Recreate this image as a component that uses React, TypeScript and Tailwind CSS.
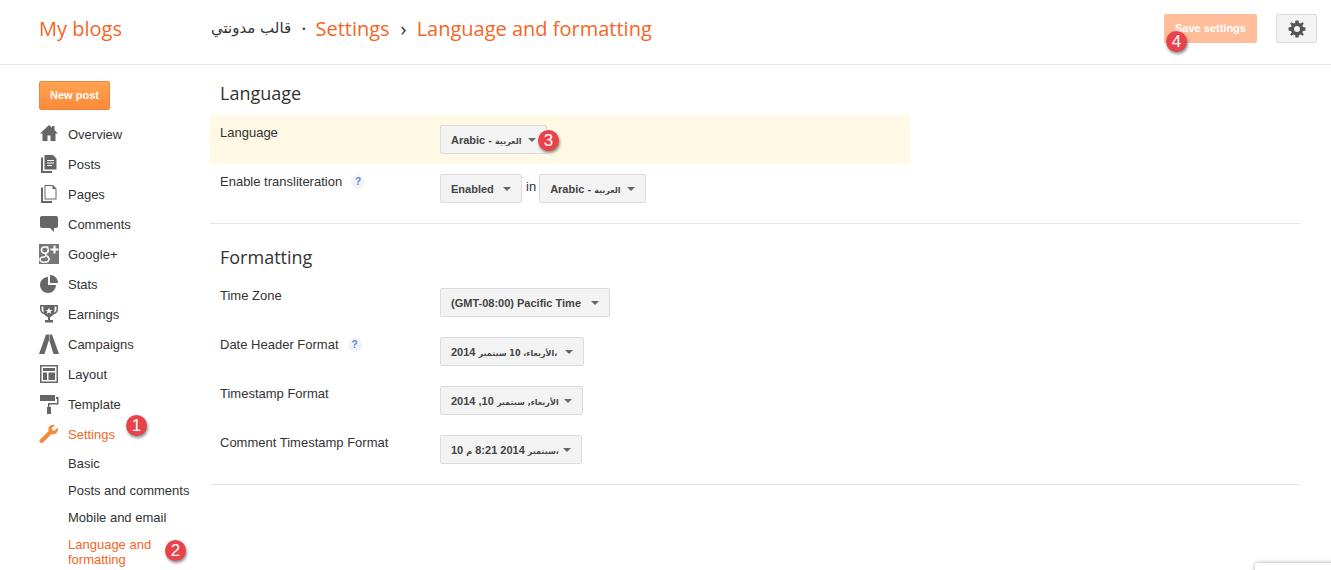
import type { ReactNode } from 'react';

const arabicStack = { fontFamily: '"DejaVu Sans", sans-serif' };

function Badge({ n, className }: { n: number; className: string }) {
  return (
    <span className={`absolute z-10 flex h-[21px] w-[21px] items-center justify-center rounded-full bg-[#e8424a] text-[17px] font-light leading-none text-white shadow-[1px_2px_3px_rgba(0,0,0,0.45)] ${className}`}>
      {n}
    </span>
  );
}

const icons: Record<string, ReactNode> = {
  overview: <path d="M10 1 L13 3.8 V2 H15.5 V6 L19 9.5 H16.5 V17 H11.5 V11.5 H8.5 V17 H3.5 V9.5 H1 Z" />,
  posts: (
    <>
      <path d="M4 3.5 H2 V19 H13 V17 H4 Z" />
      <path fillRule="evenodd" d="M5.5 1 H14 L17.5 4.5 V15.5 H5.5 Z M8 6 V7 H15 V6 Z M8 8.5 V9.5 H15 V8.5 Z M8 11 V12 H13 V11 Z" />
    </>
  ),
  pages: (
    <>
      <path d="M4 3.5 H2 V19 H13 V17 H4 Z" />
      <path fillRule="evenodd" d="M5.5 1 H14 L17.5 4.5 V15.5 H5.5 Z M6.5 2 V14.5 H16.5 V5 H13.5 V2 Z" />
    </>
  ),
  comments: <path d="M3 2 H17 Q19 2 19 4 V12 Q19 14 17 14 H15 V18 L11 14 H3 Q1 14 1 12 V4 Q1 2 3 2 Z" />,
  google: (
    <>
      <rect width="20" height="20" fill="#777777" />
      <path d="M14.5 1.5 H16.5 V4.5 H19.5 V6.5 H16.5 V9.5 H14.5 V6.5 H11.5 V4.5 H14.5 Z" fill="#ffffff" />
      <path d="M9.5 3 H5.5 C3.5 3 2.5 4.5 2.5 6 C2.5 8 4 9.2 6 9.2 C8 9.2 9.3 7.8 9.3 6 C9.3 5 8.8 4 8 3.4" fill="none" stroke="#ffffff" strokeWidth="1.6" />
      <path d="M7 9.5 C6 10.5 7 11.3 8 12 C9.5 13 10 14 10 15 C10 17 8 18.3 5.5 18.3 C3 18.3 1 17.2 1 15.4 C1 13.8 3 12.5 6.5 12.7" fill="none" stroke="#ffffff" strokeWidth="1.6" />
    </>
  ),
  stats: (
    <>
      <path d="M9 3 A8 8 0 1 0 17 11 H9 Z" />
      <path d="M11 1 A8 8 0 0 1 19 9 H11 Z" />
    </>
  ),
  earnings: (
    <path fillRule="evenodd" d="M1 1 H19 V5 C19 8 17 10 14.5 10.5 C13.5 12 12 12.7 11 13 V16 H14 V18.5 H6 V16 H9 V13 C8 12.7 6.5 12 5.5 10.5 C3 10 1 8 1 5 Z M2.5 2.5 V5 C2.5 6.5 3.5 8 5 8.7 C4.5 7 4.3 4.5 4.3 2.5 Z M17.5 2.5 H15.7 C15.7 4.5 15.5 7 15 8.7 C16.5 8 17.5 6.5 17.5 5 Z M10 3.5 L11 6 H13.5 L11.5 7.5 L12.3 10 L10 8.5 L7.7 10 L8.5 7.5 L6.5 6 H9 Z" />
  ),
  campaigns: (
    <>
      <path d="M7 0.5 H10 V6 L5.5 20 H0 Z" />
      <path d="M10.5 0.5 H13 L20 20 H14.5 L10.5 7 Z" />
    </>
  ),
  layout: <path fillRule="evenodd" d="M1 1 H19 V19 H1 Z M2.5 2.5 V17.5 H17.5 V2.5 Z M4 4 H16 V7 H4 Z M4 8.5 H8 V16 H4 Z M9.5 8.5 H16 V16 H9.5 Z" />,
  template: (
    <>
      <path d="M1 1 H16 V7 H1 Z" />
      <path d="M17 3 H19.5 V10.5 H10.5 V13 H12 V20 H8 V13 H9 V9 H18 V5 H17 Z" />
    </>
  ),
  settings: <path d="M18.8 3.6 L15.5 6.8 L13.3 6.3 L12.8 4.1 L16 1 C13.8 0.2 11.5 0.9 10.3 2.5 C9.3 3.9 9.1 5.6 9.7 7 L1 15.5 C0.2 16.4 0.2 17.7 1 18.5 C1.9 19.3 3.2 19.3 4 18.5 L12.6 9.9 C14.1 10.5 15.9 10.3 17.2 9.2 C18.8 7.9 19.5 5.6 18.8 3.6 Z" />,
};

function NavItem({ icon, label, active }: { icon: string; label: string; active?: boolean }) {
  return (
    <div className={`flex h-[30px] items-center text-[13px] ${active ? 'text-[#f4661f]' : 'text-[#333333]'}`}>
      <svg viewBox="0 0 20 20" className={`mr-[9px] h-5 w-5 shrink-0 ${active ? 'text-[#f58b3c]' : 'text-[#666666]'}`} fill="currentColor">
        {icons[icon]}
      </svg>
      <span className="pt-[2px]">{label}</span>
    </div>
  );
}

function SubItem({ children, active, className = '' }: { children: ReactNode; active?: boolean; className?: string }) {
  return <div className={`pl-[29px] text-[13px] leading-[15px] ${active ? 'text-[#f4661f]' : 'text-[#333333]'} ${className}`}>{children}</div>;
}

function Select({ children, width }: { children: ReactNode; width: string }) {
  return (
    <div className={`flex h-[29px] shrink-0 items-center rounded-[2px] border border-[#dcdcdc] bg-[#f3f3f3] pl-[10px] pr-[10px] text-[11px] font-bold text-[#444444] ${width}`}>
      <span className="whitespace-nowrap pt-px">{children}</span>
      <span className="ml-auto h-0 w-0 border-x-[4px] border-t-[4px] border-x-transparent border-t-[#666666]" />
    </div>
  );
}

function Help() {
  return (
    <span className="ml-[9px] inline-flex h-[14px] w-[14px] items-center justify-center rounded-full bg-[#f1f3f8] text-[10px] font-bold text-[#5b84d8]">?</span>
  );
}

function Ar({ children }: { children: ReactNode }) {
  return <span style={arabicStack} className="text-[8px]" dir="rtl">{children}</span>;
}

function Row({ label, help, children, className = '' }: { label: string; help?: boolean; children: ReactNode; className?: string }) {
  return (
    <div className={`flex items-start ${className}`}>
      <div className="flex w-[220px] shrink-0 items-center text-[13px] leading-[16px] text-[#333333]">
        {label}
        {help && <Help />}
      </div>
      {children}
    </div>
  );
}

export default function App() {
  return (
    <div className="relative h-[570px] w-[1331px] overflow-hidden bg-white" style={{ fontFamily: '"Liberation Sans", Arial, sans-serif' }}>
      {/* Top bar */}
      <header className="flex h-[65px] items-center border-b border-[#e5e5e5] pb-[7px] pl-[39px] pr-[14px]">
        <div className="w-[172px] text-[20px] text-[#f4661f]" style={{ fontFamily: '"Open Sans", sans-serif' }}>My blogs</div>
        <div className="flex items-center text-[20px] text-[#f4661f]" style={{ fontFamily: '"Open Sans", sans-serif' }}>
          <span style={arabicStack} className="text-[15px] text-[#333333]" dir="rtl">قالب مدونتي</span>
          <span className="ml-[10px] mr-[9px] text-[#333333]">·</span>
          <span>Settings</span>
          <span className="ml-[11px] mr-[10px] text-[#333333]">›</span>
          <span>Language and formatting</span>
        </div>
        <div className="ml-auto flex items-center gap-[19px]">
          <div className="relative flex h-[29px] w-[93px] items-center justify-center rounded-[2px] bg-[#ffbd99] text-[11px] font-bold text-white">
            Save settings
            <Badge n={4} className="left-[2px] top-[17px]" />
          </div>
          <div className="flex h-[29px] w-[41px] items-center justify-center rounded-[2px] border border-[#dcdcdc] bg-[#f3f3f3]">
            <svg viewBox="0 0 18 18" className="h-[18px] w-[18px] text-[#555555]" fill="currentColor">
              <path fillRule="evenodd" d="M7.5 0.5 H10.5 L11 3 L12.5 3.6 L14.6 2.2 L15.8 3.4 L14.4 5.5 L15 7 L17.5 7.5 V10.5 L15 11 L14.4 12.5 L15.8 14.6 L14.6 15.8 L12.5 14.4 L11 15 L10.5 17.5 H7.5 L7 15 L5.5 14.4 L3.4 15.8 L2.2 14.6 L3.6 12.5 L3 11 L0.5 10.5 V7.5 L3 7 L3.6 5.5 L2.2 3.4 L3.4 2.2 L5.5 3.6 L7 3 Z M9 6 A3 3 0 1 0 9 12 A3 3 0 1 0 9 6 Z" />
            </svg>
          </div>
        </div>
      </header>

      <div className="flex">
        {/* Sidebar */}
        <aside className="relative w-[210px] shrink-0 pl-[39px] pt-[16px]">
          <div className="mb-[9px] flex h-[29px] w-[71px] items-center justify-center rounded-[2px] border border-[#f0883c] bg-gradient-to-b from-[#ffa352] to-[#fb8a3a] text-[11px] font-bold text-white">
            New post
          </div>
          <NavItem icon="overview" label="Overview" />
          <NavItem icon="posts" label="Posts" />
          <NavItem icon="pages" label="Pages" />
          <NavItem icon="comments" label="Comments" />
          <NavItem icon="google" label="Google+" />
          <NavItem icon="stats" label="Stats" />
          <NavItem icon="earnings" label="Earnings" />
          <NavItem icon="campaigns" label="Campaigns" />
          <NavItem icon="layout" label="Layout" />
          <NavItem icon="template" label="Template" />
          <NavItem icon="settings" label="Settings" active />
          <SubItem className="mt-[7px]">Basic</SubItem>
          <SubItem className="mt-[12px]">Posts and comments</SubItem>
          <SubItem className="mt-[12px]">Mobile and email</SubItem>
          <SubItem className="mt-[12px]" active>Language and<br />formatting</SubItem>
          <Badge n={1} className="left-[126px] top-[350px]" />
          <Badge n={2} className="left-[165px] top-[475px]" />
        </aside>

        {/* Main form */}
        <main className="w-[1090px]">
          <h2 className="h-[50px] pl-[10px] pt-[16px] text-[18px] leading-[24px] text-[#333333]" style={{ fontFamily: '"Open Sans", sans-serif' }}>Language</h2>
          <div className="relative w-[700px] bg-[#fff8e5] py-[10px] pl-[10px]">
            <Row label="Language">
              <Select width="w-[107px]">Arabic - <Ar>العربية</Ar></Select>
            </Row>
            <Badge n={3} className="left-[328px] top-[15px]" />
          </div>
          <Row label="Enable transliteration" help className="mt-[10px] pl-[10px]">
            <Select width="w-[82px]">Enabled</Select>
            <span className="ml-[4px] mr-[3px] text-[13px] leading-[26px] text-[#333333]">in</span>
            <Select width="w-[107px]">Arabic - <Ar>العربية</Ar></Select>
          </Row>
          <div className="mt-[20px] border-b border-[#e5e5e5]" />

          <h2 className="mt-[21px] h-[43px] pl-[10px] text-[18px] leading-[24px] text-[#333333]" style={{ fontFamily: '"Open Sans", sans-serif' }}>Formatting</h2>
          <Row label="Time Zone" className="pl-[10px]">
            <Select width="w-[170px]">(GMT-08:00) Pacific Time</Select>
          </Row>
          <Row label="Date Header Format" help className="mt-[20px] pl-[10px]">
            <Select width="w-[144px]">2014 <Ar>،الأربعاء، 10 سبتمبر</Ar></Select>
          </Row>
          <Row label="Timestamp Format" className="mt-[20px] pl-[10px]">
            <Select width="w-[143px]">2014 ,10 <Ar>الأربعاء, سبتمبر</Ar></Select>
          </Row>
          <Row label="Comment Timestamp Format" className="mt-[20px] pl-[10px]">
            <Select width="w-[142px]">10 <Ar>م</Ar> 8:21 2014 <Ar>،سبتمبر</Ar></Select>
          </Row>
          <div className="mt-[20px] border-b border-[#e5e5e5]" />
        </main>
      </div>

      {/* Corner of a widget cut off by the window */}
      <div className="absolute left-[1255px] top-[563px] h-[20px] w-[90px] rounded-tl-[2px] bg-white shadow-[0_0_4px_rgba(0,0,0,0.35)]" />
    </div>
  );
}
